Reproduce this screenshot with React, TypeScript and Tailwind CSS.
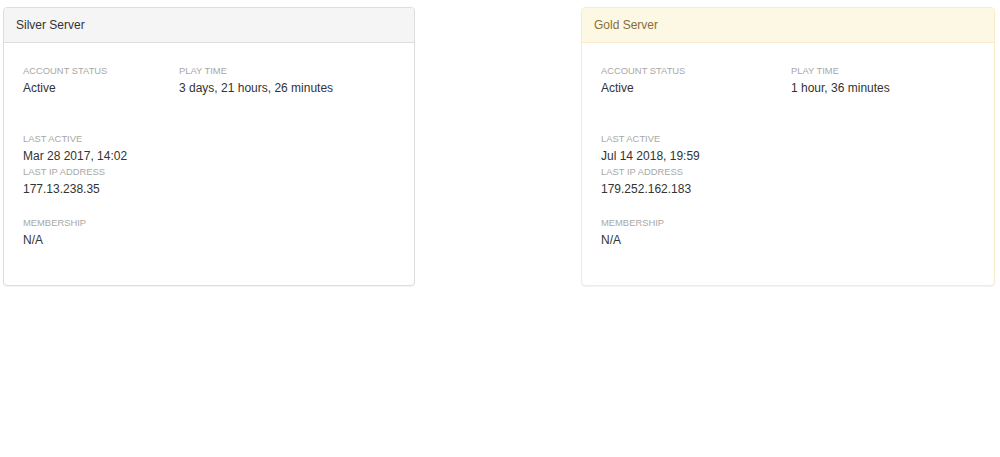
import React from "react";

type Props = {
  title: string;
  gold?: boolean;
  col: string;
  status: string;
  play: string;
  lastActive: string;
  ip: string;
};

function Label({ children }: { children: React.ReactNode }) {
  return <div className="text-[9.4px] leading-[12px] text-[#a8a8a8] uppercase">{children}</div>;
}
function Value({ children }: { children: React.ReactNode }) {
  return <div className="mt-[3px] text-[12px] leading-[16px] text-[#333]">{children}</div>;
}

function Card({ title, gold, col, status, play, lastActive, ip }: Props) {
  return (
    <div
      className={
        "rounded-[4px] border bg-white shadow-[0_1px_1px_rgba(0,0,0,0.05)] overflow-hidden " +
        (gold ? "border-[#faebcc]" : "border-[#dddddd]")
      }
    >
      <div
        className={
          "h-[35px] flex items-center pl-[12px] text-[12px] border-b " +
          (gold ? "bg-[#fcf8e3] text-[#8a6d3b] border-[#faebcc]" : "bg-[#f5f5f5] text-[#333] border-[#dddddd]")
        }
      >
        {title}
      </div>
      <div className="pl-[19px] pt-[22px] pb-[37px]">
        <div className="flex">
          <div className={col}>
            <Label>Account Status</Label>
            <Value>{status}</Value>
          </div>
          <div>
            <Label>Play Time</Label>
            <Value>{play}</Value>
          </div>
        </div>
        <div className="mt-[37px]">
          <Label>Last Active</Label>
          <Value>{lastActive}</Value>
        </div>
        <div className="mt-[2px]">
          <Label>Last IP Address</Label>
          <Value>{ip}</Value>
        </div>
        <div className="mt-[20px]">
          <Label>Membership</Label>
          <Value>N/A</Value>
        </div>
      </div>
    </div>
  );
}

export default function App() {
  return (
    <div
      className="w-[1000px] h-[457px] bg-white pt-[7px] pl-[3px] flex"
      style={{ fontFamily: '"Liberation Sans", Arial, sans-serif' }}
    >
      <div className="w-[412px]">
        <Card
          title="Silver Server"
          col="w-[156px]"
          status="Active"
          play="3 days, 21 hours, 26 minutes"
          lastActive="Mar 28 2017, 14:02"
          ip="177.13.238.35"
        />
      </div>
      <div className="w-[414px] ml-[166px]">
        <Card
          gold
          title="Gold Server"
          col="w-[190px]"
          status="Active"
          play="1 hour, 36 minutes"
          lastActive="Jul 14 2018, 19:59"
          ip="179.252.162.183"
        />
      </div>
    </div>
  );
}
